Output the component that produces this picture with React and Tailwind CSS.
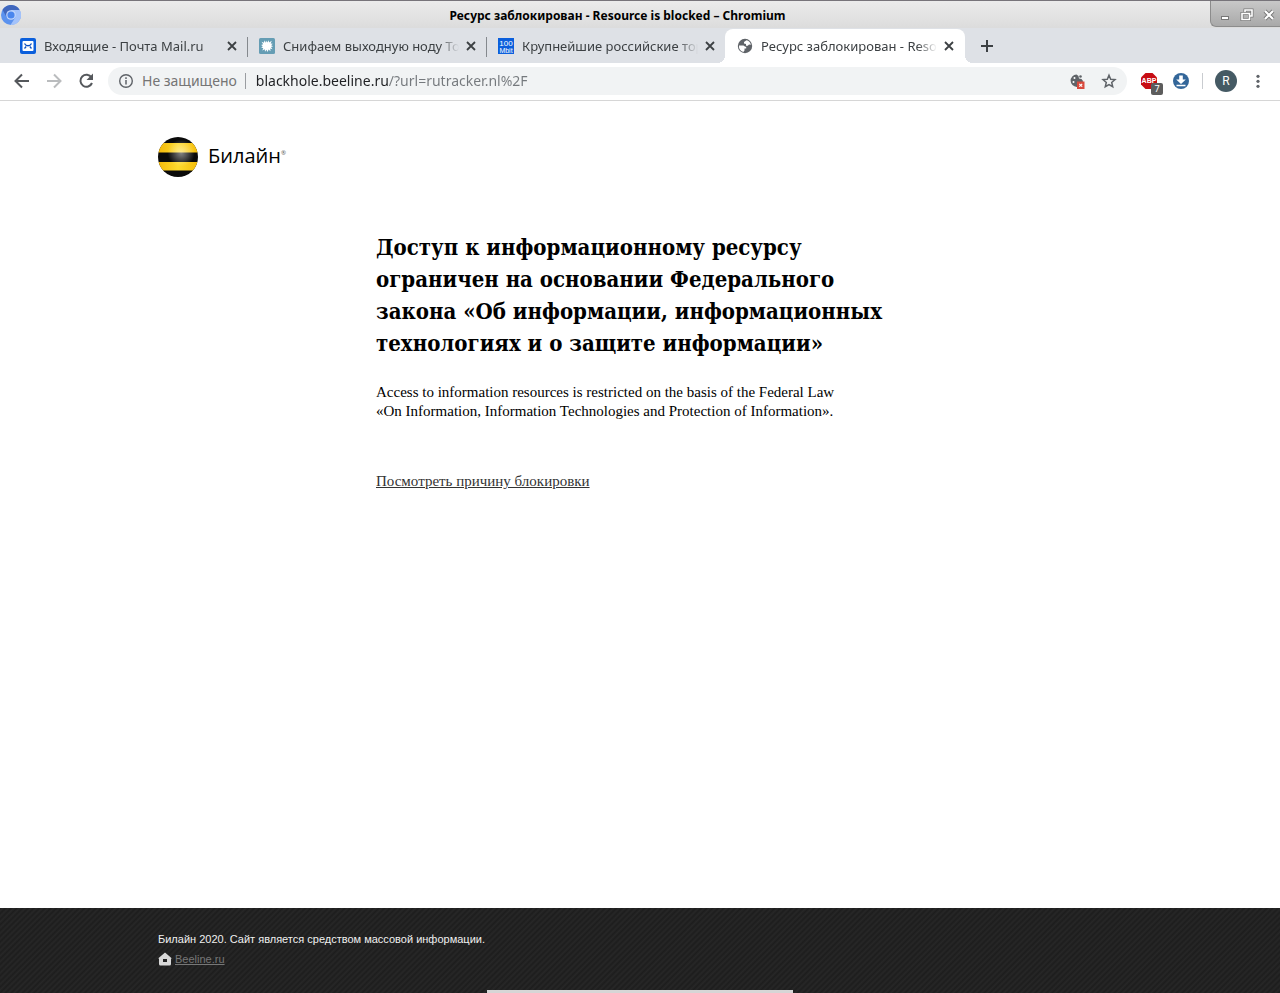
import React from "react";

function ChromiumIcon() {
  return (
    <svg viewBox="0 0 20 20" className="size-5 shrink-0" aria-hidden="true">
      <circle cx="10" cy="10" r="10" fill="#5b92ee" />
      <path d="M1.5 4.700A10 10 0 0 1 18.700 5H10L5.500 12Z" fill="#4067bd" />
      <path d="M18.700 5A10 10 0 0 1 9.500 20L14.300 12.500 10 5Z" fill="#a3c2fa" />
      <circle cx="10" cy="10" r="4.800" fill="#c3d7fb" />
      <circle cx="10" cy="10" r="3.600" fill="#4a86ee" />
    </svg>
  );
}

function MailIcon() {
  return (
    <svg viewBox="0 0 16 16" className="size-4 shrink-0" aria-hidden="true">
      <rect width="16" height="16" rx="2" fill="#0b5fdc" />
      <rect x="2.500" y="3" width="11" height="10" rx="1" fill="#fff" />
      <path d="M4.500 5.500C6 8.500 10 8.500 11.500 5.500M4.500 10.500l1.700-2M11.500 10.500l-1.700-2" fill="none" stroke="#0b4fc0" strokeWidth="1.300" />
    </svg>
  );
}

function SplatIcon() {
  return (
    <svg viewBox="0 0 16 16" className="size-4 shrink-0" aria-hidden="true">
      <rect width="16" height="16" rx="1.5" fill="#659db4" />
      <path
        d="M6.500 4.800L7 2.500l1.200 2L9.800 2.200l.2 2.300L12.800 2.800l-1.200 2.700 2.200.2-1.700 1.500 2 1-2.100.8 1.500 2.200-2.300-.6.300 2.600-2-1.700-.8 2.500-1.300-2.300L6 13.800l-.2-2.600-2.500 1.300 1-2.500-2.100-.2 1.600-1.500-1.700-1.200 2.100-.8L2.500 3.800l2.500 1L5 2.300Z"
        fill="#fff"
      />
    </svg>
  );
}

function MbitIcon() {
  return (
    <svg viewBox="0 0 16 16" className="size-4 shrink-0" aria-hidden="true">
      <rect width="16" height="16" fill="#0b5fdc" />
      <g fill="#fff" fontFamily="Liberation Sans, sans-serif" textAnchor="middle">
        <text x="8" y="7.5" fontSize="8">100</text>
        <text x="8" y="14.5" fontSize="7">Mbit</text>
      </g>
    </svg>
  );
}

function GlobeIcon() {
  return (
    <svg viewBox="0 0 16 16" className="size-4 shrink-0" aria-hidden="true">
      <circle cx="8" cy="8" r="7.2" fill="#5f6368" />
      <path d="M9.500 2.300L7 4v1.600l2 .5v1.700h1.800l1.200-1.400 1.900.3A6.200 6.200 0 0 0 9.500 2.300Z" fill="#fff" />
      <path d="M2 7.400h4.500l1.700 1.300h1v1.800H7.500v2L6.300 13.900A6.200 6.200 0 0 1 2 7.400Z" fill="#fff" />
    </svg>
  );
}

function CloseIcon() {
  return (
    <svg viewBox="0 0 16 16" className="size-4" aria-hidden="true">
      <path d="M4 4l8 8M12 4l-8 8" stroke="#3c4043" strokeWidth="1.8" />
    </svg>
  );
}

const tabs = [
  { title: "Входящие - Почта Mail.ru", icon: MailIcon },
  { title: "Снифаем выходную ноду Tor", icon: SplatIcon },
  { title: "Крупнейшие российские торренты", icon: MbitIcon },
  { title: "Ресурс заблокирован - Resource is blocked", icon: GlobeIcon, active: true },
];

function Tab({ title, icon: Icon, active, divider }) {
  return (
    <div
      className={
        "relative flex min-w-0 items-center pl-3 " +
        (active ? "flex-[0_1_240px] rounded-t-lg bg-white pr-2" : "flex-[0_1_239px] pr-[7px]")
      }
    >
      {active && (
        <>
          <span className="absolute bottom-0 -left-2 size-2 bg-[radial-gradient(circle_at_0_0,transparent_8px,white_8px)]" />
          <span className="absolute -right-2 bottom-0 size-2 bg-[radial-gradient(circle_at_100%_0,transparent_8px,white_8px)]" />
        </>
      )}
      <button type="button" role="tab" aria-selected={!!active} className="flex min-w-0 flex-1 items-center gap-2 text-left">
        <Icon />
        <span className="min-w-0 flex-1 overflow-hidden mask-[linear-gradient(to_right,black_calc(100%-20px),transparent)] text-[13px] leading-5 whitespace-nowrap text-[#3c4043]">
          {title}
        </span>
      </button>
      <button type="button" aria-label="Закрыть вкладку" className="ml-1 shrink-0">
        <CloseIcon />
      </button>
      {divider && <span className="absolute top-2 -right-px h-5 w-px bg-[#85898e]" />}
    </div>
  );
}

function TitleBar() {
  return (
    <header className="flex h-7 items-center border-t border-[#77747a] bg-linear-to-b from-[#ebebeb] to-[#dcdcdc] pl-px">
      <ChromiumIcon />
      <h1 className="min-w-0 flex-1 truncate pt-0.5 pl-1 text-center text-xs font-bold text-black">
        Ресурс заблокирован - Resource is blocked – Chromium
      </h1>
      <div className="flex h-[26px] w-[70px] shrink-0 items-center justify-between self-start rounded-bl-md border-b border-l border-[#8c8c8c] bg-linear-to-b from-[#c8c8c8] to-[#a9a9a9] pt-0.5 pr-1 pl-[7px]">
        <button type="button" aria-label="Свернуть">
          <svg viewBox="0 0 14 14" className="size-3.5">
            <rect x="3.5" y="8.5" width="7" height="3" fill="#fff" stroke="#777" />
          </svg>
        </button>
        <button type="button" aria-label="Восстановить">
          <svg viewBox="0 0 14 14" className="size-3.5" fill="none">
            <path d="M5 4V2h7v6h-2M2 5.500h7.500v6H2Z" stroke="#777" strokeWidth="3" />
            <path d="M5 4V2h7v6h-2M2 5.500h7.500v6H2Z" stroke="#fff" strokeWidth="1.6" />
          </svg>
        </button>
        <button type="button" aria-label="Закрыть">
          <svg viewBox="0 0 14 14" className="size-3.5" fill="none">
            <path d="M3 3l8 8M11 3l-8 8" stroke="#777" strokeWidth="4" />
            <path d="M3 3l8 8M11 3l-8 8" stroke="#fff" strokeWidth="2.2" />
          </svg>
        </button>
      </div>
    </header>
  );
}

function Toolbar() {
  return (
    <div className="flex h-[38px] items-center border-b border-[#d6d6d6] bg-white pr-[13px] pb-px pl-3">
      <div className="flex items-center gap-3 pr-3">
        <button type="button" aria-label="Назад">
          <svg viewBox="0 0 20 20" className="size-5" fill="none" stroke="#55585c" strokeWidth="2">
            <path d="M17 10H4M10 3.500L3.500 10l6.500 6.500" />
          </svg>
        </button>
        <button type="button" aria-label="Вперёд">
          <svg viewBox="0 0 20 20" className="size-5" fill="none" stroke="#babcbe" strokeWidth="2">
            <path d="M3 10h13M10 3.500l6.500 6.500-6.500 6.500" />
          </svg>
        </button>
        <button type="button" aria-label="Обновить">
          <svg viewBox="0 0 20 20" className="size-5" aria-hidden="true">
            <path d="M15.500 6.500A6 6 0 1 0 16 12" fill="none" stroke="#55585c" strokeWidth="2" />
            <path d="M17 2.500V9h-6.500Z" fill="#55585c" />
          </svg>
        </button>
      </div>
      <div className="flex h-7 min-w-0 flex-1 items-center rounded-full bg-[#f1f3f4] pr-2.5 pl-2.5">
        <svg viewBox="0 0 16 16" className="size-4 shrink-0" aria-hidden="true">
          <circle cx="8" cy="8" r="6.3" fill="none" stroke="#5f6368" strokeWidth="1.4" />
          <path d="M8 7v4.500M8 4.300v1.600" stroke="#5f6368" strokeWidth="1.5" />
        </svg>
        <label htmlFor="address" className="ml-2 shrink-0 border-r border-[#9a9da1] pr-2 text-sm leading-4 text-[#757575]">
          Не защищено
        </label>
        <input
          id="address"
          type="text"
          defaultValue="blackhole.beeline.ru/?url=rutracker.nl%2F"
          className="ml-2.5 min-w-0 flex-1 bg-[linear-gradient(to_right,#202124_133px,#75797d_133px)] bg-clip-text text-sm text-transparent caret-black outline-none"
        />
        <button type="button" aria-label="Файлы cookie заблокированы" className="mr-4">
          <svg viewBox="0 0 16 16" className="size-4">
            <path d="M7.500 1.500A6.200 6.200 0 1 0 14 8L12.500 6 10 5.500 9.500 3Z" fill="#5f6368" />
            <circle cx="11.5" cy="3.5" r="1.3" fill="#5f6368" />
            <circle cx="5.500" cy="5" r="1" fill="#fff" />
            <circle cx="4.500" cy="9" r="1" fill="#fff" />
            <rect x="8" y="8.5" width="7.5" height="7.5" fill="#d94a3d" />
            <path d="M10.300 10.800l2.900 2.900M13.200 10.800l-2.900 2.900" stroke="#fff" strokeWidth="1.2" />
          </svg>
        </button>
        <button type="button" aria-label="Добавить в закладки">
          <svg viewBox="0 0 16 16" className="size-4" fill="none" stroke="#5f6368" strokeWidth="1.5">
            <path d="M8 2.200l1.700 4 4.300.4-3.300 2.900 1 4.200L8 11.500l-3.700 2.200 1-4.200L2 6.600l4.300-.4Z" />
          </svg>
        </button>
      </div>
      <div className="flex shrink-0 items-center pl-3">
        <button type="button" aria-label="ABP" className="relative flex size-5 items-center justify-center">
          <svg viewBox="0 0 18 18" className="size-[18px]">
            <path d="M5.500 1h7L17 5.500v7L12.500 17h-7L1 12.500v-7Z" fill="#c70d14" />
            <text x="9" y="11" textAnchor="middle" fill="#fff" fontSize="7" fontWeight="700" fontFamily="Liberation Sans, sans-serif">
              ABP
            </text>
          </svg>
          <span className="absolute top-3 left-3 flex h-3 w-3 items-center justify-center rounded-xs bg-[#5c5c5c] text-[9px] leading-3 text-white">
            7
          </span>
        </button>
        <button type="button" aria-label="Загрузки" className="ml-[13px]">
          <svg viewBox="0 0 18 18" className="size-[18px]">
            <circle cx="9" cy="9" r="8" fill="#336699" />
            <path d="M7.200 3.500h3.600v4h3L9 12 4.200 7.500h3ZM4.500 12.800h9v1.400h-9Z" fill="#fff" />
          </svg>
        </button>
        <span className="mx-3 h-4 w-px bg-[#c9ccd0]" />
        <button type="button" aria-label="Профиль" className="flex size-[22px] items-center justify-center rounded-full bg-[#455a64] font-[Roboto,sans-serif] text-xs text-white">
          R
        </button>
        <button type="button" aria-label="Меню" className="ml-3">
          <svg viewBox="0 0 18 18" className="size-[18px]" fill="#5f6368">
            <circle cx="9" cy="4.3" r="1.6" />
            <circle cx="9" cy="9.3" r="1.6" />
            <circle cx="9" cy="14.3" r="1.6" />
          </svg>
        </button>
      </div>
    </div>
  );
}

function BeelineLogo() {
  return (
    <a href="#" className="flex w-fit items-center gap-2.5 text-black">
      <svg viewBox="0 0 40 40" className="size-10" aria-hidden="true">
        <defs>
          <clipPath id="ball">
            <circle cx="20" cy="20" r="20" />
          </clipPath>
          <radialGradient id="shine" cx="0.58" cy="0.4" r="0.34">
            <stop offset="0" stopColor="#fff" stopOpacity="0.5" />
            <stop offset="1" stopColor="#fff" stopOpacity="0" />
          </radialGradient>
          <linearGradient id="honey">
            <stop offset="0" stopColor="#f2b70a" />
            <stop offset="0.5" stopColor="#ffdb2d" />
            <stop offset="1" stopColor="#f5bd0c" />
          </linearGradient>
        </defs>
        <g clipPath="url(#ball)">
          <rect width="40" height="40" fill="#0a0a0a" />
          <path d="M0 6h40v9.500H0ZM0 25h40v8.500H0Z" fill="url(#honey)" />
          <rect width="40" height="40" fill="url(#shine)" />
        </g>
      </svg>
      <span className="flex items-center pb-0.5 font-['Open_Sans',sans-serif] text-xl leading-8">
        Билайн
        <sup className="text-[6px] text-[#555]">®</sup>
      </span>
    </a>
  );
}

export default function App() {
  return (
    <div className="flex min-h-screen flex-col bg-white font-['Noto_Sans',sans-serif]">
      <TitleBar />
      <div role="tablist" className="flex h-[35px] bg-[#dee1e6] pt-px pl-2">
        {tabs.map((tab, i) => (
          <Tab key={tab.title} {...tab} divider={i < 2} />
        ))}
        <button type="button" aria-label="Новая вкладка" className="ml-3.5 shrink-0">
          <svg viewBox="0 0 16 16" className="size-4" aria-hidden="true">
            <path d="M8 2v12M2 8h12" stroke="#3c4043" strokeWidth="2" />
          </svg>
        </button>
      </div>
      <Toolbar />
      <main className="mx-auto w-full max-w-[964px] flex-1 pt-9">
        <BeelineLogo />
        <section className="mt-[54px] ml-[218px] text-black">
          <h2 className="font-['DejaVu_Serif_Condensed','DejaVu_Serif',serif] text-[22px] leading-8 font-bold">
            Доступ к информационному ресурсу
            <br />
            ограничен на основании Федерального
            <br />
            закона «Об информации, информационных
            <br />
            технологиях и о защите информации»
          </h2>
          <div className="font-['Liberation_Serif',serif] text-[15px]">
            <p className="mt-6 leading-[19px]">
              Access to information resources is restricted on the basis of the Federal Law
              <br />
              «On Information, Information Technologies and Protection of Information».
            </p>
            <a href="#" className="mt-[50px] inline-block leading-5 text-[#333] underline">
              Посмотреть причину блокировки
            </a>
          </div>
        </section>
      </main>
      <footer className="flex h-[85px] flex-col justify-between bg-[#202020] bg-[repeating-linear-gradient(135deg,#1d1d1d_0,#272727_2px,#1d1d1d_4px)]">
        <div className="mx-auto w-full max-w-[964px] pt-[21px] font-['Liberation_Sans',sans-serif] text-[11px] leading-5 text-[#f0f0f0]">
          <p>Билайн 2020. Сайт является средством массовой информации.</p>
          <a href="#" className="flex w-fit items-center gap-[3px] text-[#777] underline">
            <svg viewBox="0 0 14 14" className="size-3.5" aria-hidden="true">
              <path d="M7 0.500L14 6.500H13V12a1.500 1.500 0 0 1-1.500 1.500h-9A1.500 1.500 0 0 1 1 12V6.500H0Z" fill="#d8d8d8" />
              <rect x="5" y="7" width="4" height="3" fill="#222" />
            </svg>
            Beeline.ru
          </a>
        </div>
        <div className="mx-auto h-[3px] w-[306px] bg-[#d6d6d6]" />
      </footer>
    </div>
  );
}
